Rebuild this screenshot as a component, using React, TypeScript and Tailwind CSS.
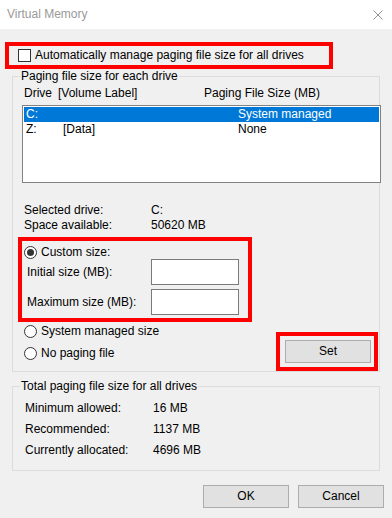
import React from "react";

const drives = [
  { drive: "C:", label: "", size: "System managed", selected: true },
  { drive: "Z:", label: "[Data]", size: "None", selected: false },
];

const totals = [
  { label: "Minimum allowed:", value: "16 MB" },
  { label: "Recommended:", value: "1137 MB" },
  { label: "Currently allocated:", value: "4696 MB" },
];

const Radio = ({ checked }: { checked?: boolean }) => (
  <span className="w-[13px] h-[13px] rounded-full border border-[#333] bg-white flex items-center justify-center shrink-0">
    {checked && <span className="w-[7px] h-[7px] rounded-full bg-[#333]" />}
  </span>
);

const Button = ({ children }: { children: React.ReactNode }) => (
  <button className="w-[86px] h-[23px] bg-[#e1e1e1] border border-[#adadad] text-[12px] leading-[21px] text-black">
    {children}
  </button>
);

export default function App() {
  return (
    <div className="w-[392px] h-[518px] bg-[#f0f0f0] text-[12px] leading-[15px] text-black overflow-hidden font-['Liberation_Sans',Arial,sans-serif]">
      {/* title bar */}
      <div className="h-[29px] bg-white flex items-center justify-between pl-[7px] pr-[9px]">
        <span className="text-[#9a9a9a]">Virtual Memory</span>
        <svg width="10" height="10" viewBox="0 0 10 10" className="mt-[1px]">
          <path d="M0.5 0.5 L9.5 9.5 M9.5 0.5 L0.5 9.5" stroke="#8f8f8f" strokeWidth="1" />
        </svg>
      </div>

      {/* auto manage */}
      <div className="mt-[13px] ml-[5px] w-[328px] h-[27px] border-[4px] border-[#ff0000] flex items-center pl-[9px] gap-[4px]">
        <span className="w-[13px] h-[13px] border border-[#333] bg-white shrink-0" />
        <span>Automatically manage paging file size for all drives</span>
      </div>

      {/* paging file size for each drive */}
      <fieldset className="ml-[12px] w-[368px] min-w-0 border border-[#dcdcdc]">
        <legend className="ml-[7px] px-[1px] leading-[14px]">Paging file size for each drive</legend>

        <div className="mt-[3px] h-[14px] leading-[14px] flex pl-[11px]">
          <span className="w-[34px]">Drive</span>
          <span className="w-[146px]">[Volume Label]</span>
          <span>Paging File Size (MB)</span>
        </div>

        <div className="mt-[5px] ml-[9px] w-[359px] h-[78px] bg-white border border-[#828282] p-[1px]">
          {drives.map((d) => (
            <div
              key={d.drive}
              className={`h-[15px] flex pl-[2px] ${d.selected ? "bg-[#0078d7] text-white" : ""}`}
            >
              <span className="w-[37px]">{d.drive}</span>
              <span className="w-[175px]">{d.label}</span>
              <span>{d.size}</span>
            </div>
          ))}
        </div>

        <div className="mt-[20px] pl-[11px]">
          <div className="flex">
            <span className="w-[127px]">Selected drive:</span>
            <span>C:</span>
          </div>
          <div className="flex">
            <span className="w-[127px]">Space available:</span>
            <span>50620 MB</span>
          </div>
        </div>

        {/* custom size */}
        <div className="mt-[4px] ml-[5px] w-[234px] h-[85px] border-[4px] border-[#ff0000] pt-[4px] pb-[3px]">
          <label className="h-[14px] flex items-center gap-[4px] pl-[2px]">
            <Radio checked />
            <span>Custom size:</span>
          </label>
          <div className="h-[26px] flex items-center pl-[5px]">
            <span className="w-[124px]">Initial size (MB):</span>
            <span className="w-[88px] h-[26px] bg-white border border-[#7a7a7a]" />
          </div>
          <div className="mt-[4px] h-[26px] flex items-center pl-[5px]">
            <span className="w-[124px]">Maximum size (MB):</span>
            <span className="w-[88px] h-[26px] bg-white border border-[#7a7a7a]" />
          </div>
        </div>

        <div className="flex justify-between pr-[1px]">
          <div className="flex flex-col gap-[4px] pl-[11px]">
            <label className="h-[18px] flex items-center gap-[4px]">
              <Radio />
              <span>System managed size</span>
            </label>
            <label className="h-[18px] flex items-center gap-[4px]">
              <Radio />
              <span>No paging file</span>
            </label>
          </div>
          <div className="mt-[10px] w-[102px] h-[39px] border-[4px] border-[#ff0000] pl-[5px] pt-[4px]">
            <Button>Set</Button>
          </div>
        </div>
      </fieldset>

      {/* totals */}
      <fieldset className="mt-[7px] ml-[12px] w-[368px] min-w-0 border border-[#dcdcdc] pb-[9px]">
        <legend className="ml-[7px] px-[1px] leading-[14px]">Total paging file size for all drives</legend>
        <div className="mt-[5px] pl-[12px]">
          {totals.map((t) => (
            <div key={t.label} className="h-[21px] flex items-center">
              <span className="w-[128px]">{t.label}</span>
              <span>{t.value}</span>
            </div>
          ))}
        </div>
      </fieldset>

      <div className="mt-[14px] flex justify-end gap-[9px] pr-[8px]">
        <Button>OK</Button>
        <Button>Cancel</Button>
      </div>
    </div>
  );
}
